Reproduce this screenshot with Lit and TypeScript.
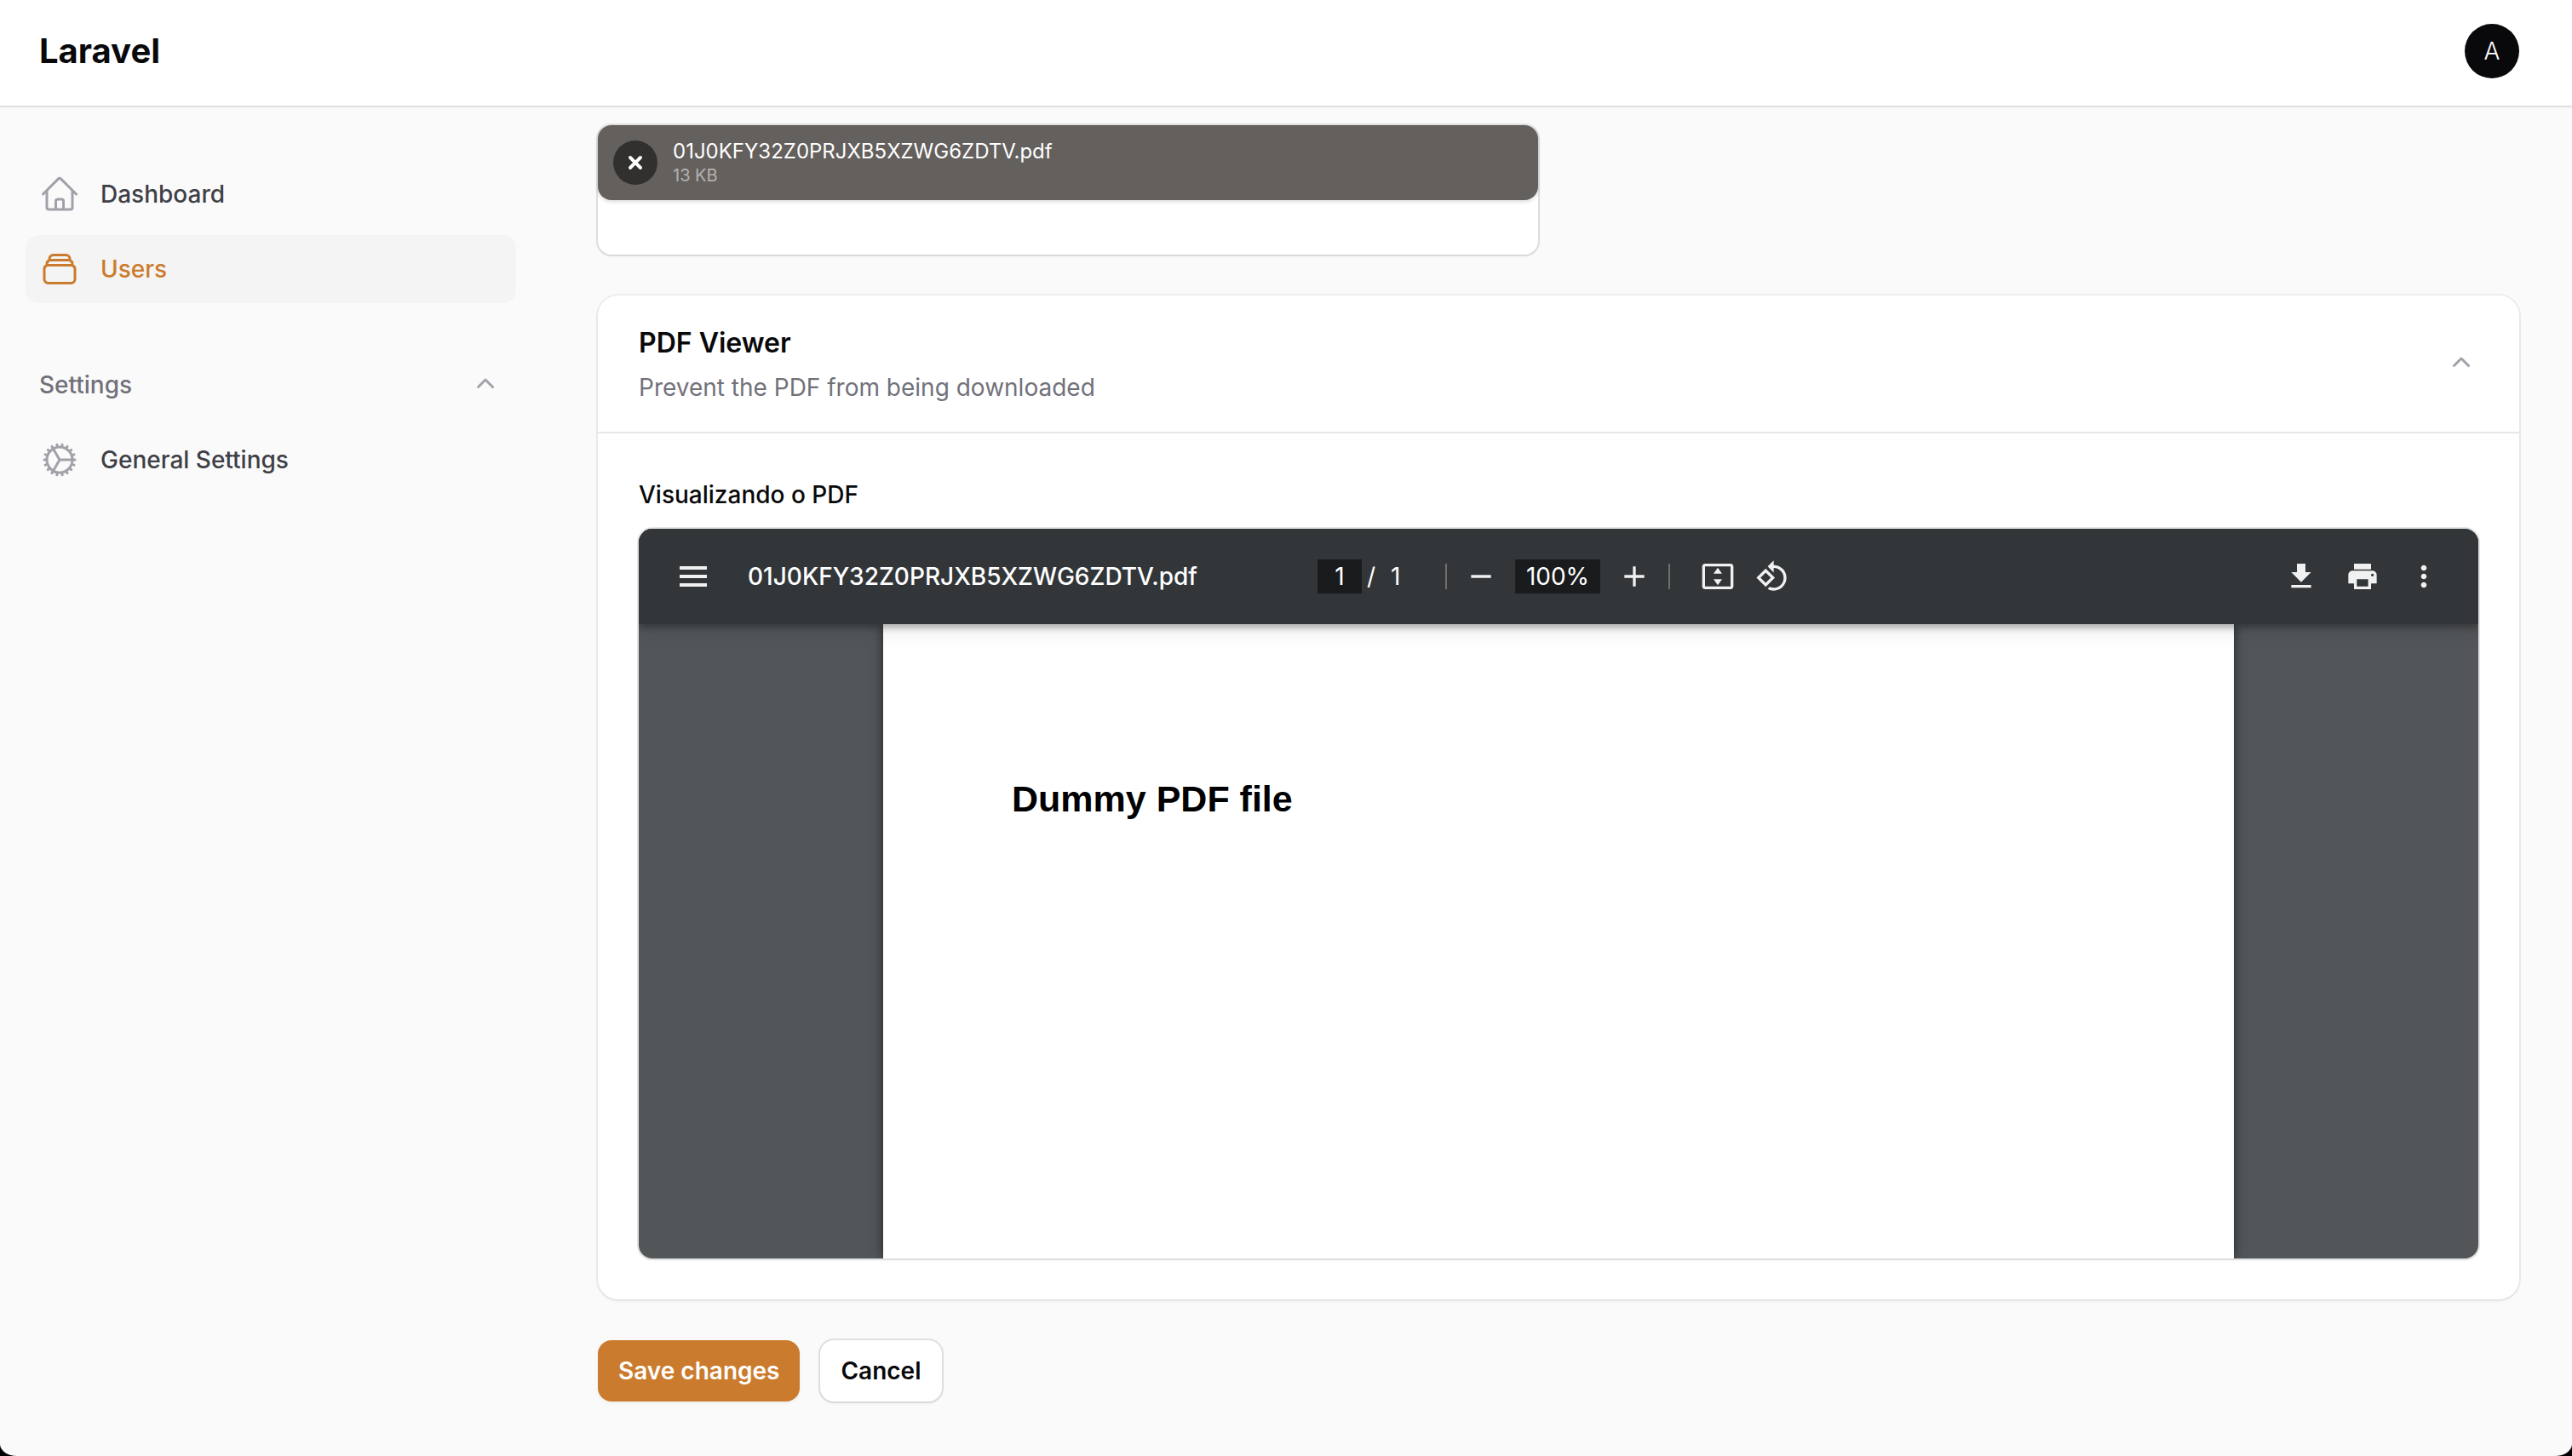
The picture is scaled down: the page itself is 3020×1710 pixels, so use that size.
import { LitElement, html, css, svg } from "lit";
import { customElement, state } from "lit/decorators.js";

const homeIcon = svg`<path d="m2.25 12 8.954-8.955c.44-.439 1.152-.439 1.591 0L21.75 12M4.5 9.75v10.125c0 .621.504 1.125 1.125 1.125H9.75v-4.875c0-.621.504-1.125 1.125-1.125h2.25c.621 0 1.125.504 1.125 1.125V21h4.125c.621 0 1.125-.504 1.125-1.125V9.75M8.25 21h8.25"/>`;
const stackIcon = svg`<path d="M6 6.878V6a2.25 2.25 0 0 1 2.25-2.25h7.5A2.25 2.25 0 0 1 18 6v.878m-12 0c.235-.083.487-.128.75-.128h10.5c.263 0 .515.045.75.128m-12 0A2.25 2.25 0 0 0 4.5 9v.878m13.5-3A2.25 2.25 0 0 1 19.5 9v.878m0 0a2.246 2.246 0 0 0-.75-.128H5.25c-.263 0-.515.045-.75.128m15 0A2.25 2.25 0 0 1 21 12v6a2.25 2.25 0 0 1-2.25 2.25H5.25A2.25 2.25 0 0 1 3 18v-6c0-.98.626-1.813 1.5-2.122"/>`;
const cogIcon = svg`<path d="M4.5 12a7.5 7.5 0 0 0 15 0m-15 0a7.5 7.5 0 1 1 15 0m-15 0H3m16.5 0H21m-1.5 0H12m-8.457 3.077 1.41-.513m14.095-5.13 1.41-.513M5.106 17.785l1.15-.964m11.49-9.642 1.149-.964M7.501 19.795l.75-1.3m7.5-12.99.75-1.3m-6.063 16.658.26-1.477m2.605-14.772.26-1.477m0 17.726-.26-1.477M10.698 4.614l-.26-1.477M16.5 19.794l-.75-1.299M7.5 4.205 12 12m6.894 5.785-1.149-.964M6.256 7.178l-1.15-.964m15.352 8.864-1.41-.513M4.954 9.435l-1.41-.514M12.002 12l-3.75 6.495"/>`;

const outline = (shape: unknown) => html`<svg class="nav-icon" viewBox="0 0 24 24" aria-hidden="true">${shape}</svg>`;
const chevron = html`<svg class="chevron" viewBox="0 0 20 20" aria-hidden="true"><path d="M9.47 6.47a.75.75 0 0 1 1.06 0l4.25 4.25a.75.75 0 1 1-1.06 1.06L10 8.06l-3.72 3.72a.75.75 0 0 1-1.06-1.06l4.25-4.25Z"/></svg>`;
const toolIcon = (d: string) => html`<svg class="tool-icon" viewBox="0 0 24 24" aria-hidden="true"><path d=${d}/></svg>`;

const MINUS = "M5 11h14v2H5z";
const PLUS = "M19 13h-6v6h-2v-6H5v-2h6V5h2v6h6z";
const FIT = "M21 3H3c-1.1 0-2 .9-2 2v14c0 1.1.9 2 2 2h18c1.1 0 2-.9 2-2V5c0-1.1-.9-2-2-2zm0 16H3V5h18v14zM12 5.8l3 4.2H9zM9 14h6l-3 4.2z";
const ROTATE = "M7.34 6.41.86 12.9l6.49 6.48 6.49-6.48-6.5-6.49zM3.69 12.9l3.66-3.66L11 12.9l-3.66 3.66-3.65-3.66zm15.67-6.26C17.61 4.88 15.3 4 13 4V.76L8.76 5 13 9.24V6c1.79 0 3.58.68 4.95 2.05 2.73 2.73 2.73 7.17 0 9.9C16.58 19.32 14.79 20 13 20c-.97 0-1.94-.21-2.84-.61l-1.49 1.49C10.02 21.62 11.51 22 13 22c2.3 0 4.61-.88 6.36-2.64 3.52-3.51 3.52-9.21 0-12.72z";
const DOWNLOAD = "M19 9h-4V3H9v6H5l7 7 7-7zM5 18v2h14v-2H5z";
const PRINT = "M19 8H5c-1.66 0-3 1.34-3 3v6h4v4h12v-4h4v-6c0-1.66-1.34-3-3-3zm-3 11H8v-5h8v5zm3-7c-.55 0-1-.45-1-1s.45-1 1-1 1 .45 1 1-.45 1-1 1zm-1-9H6v4h12V3z";
const MORE = "M12 8c1.1 0 2-.9 2-2s-.9-2-2-2-2 .9-2 2 .9 2 2 2zm0 2c-1.1 0-2 .9-2 2s.9 2 2 2 2-.9 2-2-.9-2-2-2zm0 6c-1.1 0-2 .9-2 2s.9 2 2 2 2-.9 2-2-.9-2-2-2z";

const FILE_NAME = "01J0KFY32Z0PRJXB5XZWG6ZDTV.pdf";

@customElement("pdf-viewer")
export class PdfViewer extends LitElement {
  static styles = css`
    :host {
      display: block;
      overflow: hidden;
      border-radius: 16px;
      background: #525659;
      color: #fff;
      font-family: Inter, "Liberation Sans", sans-serif;
      font-size: 28px;
    }
    button {
      display: flex;
      padding: 0;
      border: 0;
      background: none;
      color: #f1f1f1;
    }
    .toolbar {
      position: relative;
      z-index: 1;
      display: grid;
      grid-template-columns: 1fr auto 1fr;
      align-items: center;
      height: 112px;
      padding: 0 44px;
      background: #323639;
      box-shadow: 0 4px 8px rgba(0, 0, 0, 0.3), 0 8px 24px rgba(0, 0, 0, 0.08);
    }
    .start {
      display: flex;
      align-items: center;
      gap: 44px;
    }
    .name {
      font-weight: 500;
    }
    .center {
      display: flex;
      align-items: center;
    }
    .end {
      display: flex;
      justify-content: flex-end;
      gap: 32px;
    }
    .tool-icon {
      display: block;
      width: 40px;
      height: 40px;
      fill: currentColor;
    }
    .field {
      box-sizing: border-box;
      height: 40px;
      padding: 0;
      border: 0;
      background: #191b1c;
      color: #fff;
      font: inherit;
      text-align: center;
    }
    .page-field {
      width: 52px;
    }
    .zoom-field {
      width: 100px;
    }
    .count {
      display: flex;
      gap: 18px;
      padding-left: 6px;
      width: 92px;
    }
    .rule {
      width: 2px;
      height: 30px;
      background: #706f70;
    }
    .zoom {
      display: flex;
      align-items: center;
      gap: 20px;
      padding: 0 20px;
    }
    .fit {
      display: flex;
      gap: 24px;
      padding: 0 12px 0 36px;
    }
    .stage {
      display: flex;
      justify-content: center;
      min-height: 745px;
    }
    .sheet {
      box-sizing: border-box;
      width: 1586px;
      padding: 177px 151px;
      background: #fff;
      box-shadow: 0 0 12px rgba(0, 0, 0, 0.6);
    }
    .heading {
      margin: 0;
      color: #000;
      font: bold 43px/56px "Liberation Sans", Arial, sans-serif;
    }
  `;

  render() {
    return html`
      <div class="toolbar">
        <div class="start">
          <button aria-label="Menu">
            <svg class="tool-icon" viewBox="0 0 20 20" aria-hidden="true"><path d="M2 4h16v2H2zM2 9h16v2H2zM2 14h16v2H2z"/></svg>
          </button>
          <span class="name">${FILE_NAME}</span>
        </div>
        <div class="center">
          <input class="field page-field" aria-label="Page" value="1" />
          <div class="count"><span>/</span><span>1</span></div>
          <span class="rule"></span>
          <div class="zoom">
            <button aria-label="Zoom out">${toolIcon(MINUS)}</button>
            <input class="field zoom-field" aria-label="Zoom" value="100%" />
            <button aria-label="Zoom in">${toolIcon(PLUS)}</button>
          </div>
          <span class="rule"></span>
          <div class="fit">
            <button aria-label="Fit to page">${toolIcon(FIT)}</button>
            <button aria-label="Rotate">${toolIcon(ROTATE)}</button>
          </div>
        </div>
        <div class="end">
          <button aria-label="Download">${toolIcon(DOWNLOAD)}</button>
          <button aria-label="Print">${toolIcon(PRINT)}</button>
          <button aria-label="More">${toolIcon(MORE)}</button>
        </div>
      </div>
      <div class="stage">
        <article class="sheet"><h1 class="heading">Dummy PDF file</h1></article>
      </div>
    `;
  }
}

@customElement("app-root")
export class AppRoot extends LitElement {
  @state() private viewerOpen = true;
  @state() private settingsOpen = true;

  static styles = css`
    :host {
      display: block;
      background: #000;
      color: #09090b;
      font-family: Inter, "Liberation Sans", sans-serif;
      font-size: 28px;
      line-height: 40px;
    }
    .window {
      display: flex;
      flex-direction: column;
      min-height: 100vh;
      overflow: hidden;
      border-radius: 0 0 20px 20px / 0 0 14px 14px;
      background: #fafafa;
    }
    button {
      font: inherit;
    }
    .topbar {
      position: relative;
      display: flex;
      align-items: center;
      justify-content: space-between;
      padding: 28px 62px 32px 46px;
      background: #fff;
      box-shadow: 0 0 0 2px rgba(9, 9, 11, 0.08), 0 2px 4px rgba(0, 0, 0, 0.05);
    }
    .brand {
      color: inherit;
      font-size: 40px;
      font-weight: 700;
      text-decoration: none;
    }
    .avatar {
      width: 64px;
      height: 64px;
      padding: 0;
      border: 0;
      border-radius: 50%;
      background: #09090b;
      color: #fff;
      font-weight: 300;
    }
    .body {
      display: grid;
      grid-template-columns: 638px minmax(0, 1fr);
    }
    .sidebar {
      display: flex;
      flex-direction: column;
      gap: 56px;
      padding: 64px 32px 64px 30px;
    }
    .group {
      display: flex;
      flex-direction: column;
      gap: 8px;
    }
    .item {
      display: flex;
      align-items: center;
      gap: 24px;
      padding: 16px;
      border-radius: 16px;
      color: #3f3f46;
      font-weight: 500;
      text-decoration: none;
    }
    .current {
      background: #f4f4f4;
      color: #cb7b2d;
    }
    .nav-icon {
      width: 48px;
      height: 48px;
      fill: none;
      stroke: #a1a1aa;
      stroke-width: 1.5;
      stroke-linecap: round;
      stroke-linejoin: round;
    }
    .current .nav-icon {
      stroke: #cb7b2d;
    }
    .group-toggle {
      display: flex;
      align-items: center;
      justify-content: space-between;
      padding: 16px;
      border: 0;
      background: none;
      color: #71717a;
      font-weight: 500;
      line-height: 48px;
    }
    .chevron {
      display: block;
      width: 40px;
      height: 40px;
      fill: #a1a1aa;
    }
    .main {
      display: flex;
      flex-direction: column;
      gap: 48px;
      padding: 23px 62px 64px 64px;
    }
    .fields {
      display: grid;
      grid-template-columns: 1fr 1fr;
      gap: 48px;
    }
    .upload {
      padding-bottom: 64px;
      border-radius: 16px;
      background: #fff;
      box-shadow: 0 0 0 2px rgba(9, 9, 11, 0.1), 0 2px 4px rgba(0, 0, 0, 0.05);
    }
    .file {
      display: flex;
      align-items: center;
      gap: 18px;
      padding: 17px 18px;
      border-radius: 16px;
      background: #64605d;
      box-shadow: 0 2px 4px rgba(0, 0, 0, 0.15);
      color: #fff;
    }
    .file-info {
      display: flex;
      flex-direction: column;
      gap: 2px;
    }
    .remove {
      width: 52px;
      height: 52px;
      padding: 0;
      border: 0;
      border-radius: 50%;
      background: #32302e;
    }
    .remove-icon {
      display: block;
      width: 52px;
      height: 52px;
      fill: #fff;
    }
    .file-name {
      font-size: 24px;
      line-height: 28px;
    }
    .file-size {
      font-size: 20px;
      line-height: 24px;
      opacity: 0.5;
    }
    .card {
      border-radius: 24px;
      background: #fff;
      box-shadow: 0 0 0 2px rgba(9, 9, 11, 0.05), 0 2px 4px rgba(0, 0, 0, 0.05);
    }
    .card-head {
      display: flex;
      align-items: center;
      justify-content: space-between;
      padding: 32px 48px;
    }
    .titles {
      display: flex;
      flex-direction: column;
      gap: 8px;
    }
    .title {
      margin: 0;
      font-size: 32px;
      font-weight: 600;
      line-height: 48px;
    }
    .text {
      margin: 0;
      color: #71717a;
    }
    .collapse {
      padding: 0;
      border: 0;
      background: none;
    }
    .card-body {
      display: flex;
      flex-direction: column;
      gap: 16px;
      padding: 48px;
      border-top: 2px solid #e5e7eb;
    }
    .label {
      font-weight: 500;
      line-height: 48px;
    }
    .viewer {
      box-shadow: 0 0 0 2px rgba(9, 9, 11, 0.1), 0 2px 4px rgba(0, 0, 0, 0.05);
    }
    .actions {
      display: flex;
      gap: 24px;
    }
    .action {
      padding: 16px 24px;
      border: 0;
      border-radius: 16px;
      font-weight: 600;
    }
    .primary {
      background: #cb7b2d;
      color: #fff;
      box-shadow: 0 2px 4px rgba(0, 0, 0, 0.05);
    }
    .secondary {
      background: #fff;
      color: #09090b;
      box-shadow: 0 0 0 2px rgba(9, 9, 11, 0.1), 0 2px 4px rgba(0, 0, 0, 0.05);
    }
  `;

  render() {
    return html`
      <div class="window">
        <header class="topbar">
          <a class="brand" href="#">Laravel</a>
          <button class="avatar" aria-label="User menu">A</button>
        </header>
        <div class="body">
          <nav class="sidebar">
            <div class="group">
              <a class="item" href="#dashboard">${outline(homeIcon)}Dashboard</a>
              <a class="item current" href="#users" aria-current="page">${outline(stackIcon)}Users</a>
            </div>
            <div class="group">
              <button class="group-toggle" @click=${() => (this.settingsOpen = !this.settingsOpen)}>Settings${chevron}</button>
              ${this.settingsOpen
                ? html`<a class="item" href="#settings">${outline(cogIcon)}General Settings</a>`
                : null}
            </div>
          </nav>
          <main class="main">
            <div class="fields">
              <div class="upload">
                <div class="file">
                  <button class="remove" aria-label="Remove">
                    <svg class="remove-icon" viewBox="0 0 26 26" aria-hidden="true"><path d="M11.586 13l-2.293 2.293a1 1 0 0 0 1.414 1.414L13 14.414l2.293 2.293a1 1 0 0 0 1.414-1.414L14.414 13l2.293-2.293a1 1 0 0 0-1.414-1.414L13 11.586l-2.293-2.293a1 1 0 0 0-1.414 1.414L11.586 13z"/></svg>
                  </button>
                  <div class="file-info">
                    <div class="file-name">${FILE_NAME}</div>
                    <div class="file-size">13 KB</div>
                  </div>
                </div>
              </div>
            </div>
            <section class="card">
              <div class="card-head">
                <div class="titles">
                  <h2 class="title">PDF Viewer</h2>
                  <p class="text">Prevent the PDF from being downloaded</p>
                </div>
                <button class="collapse" aria-label="Collapse" @click=${() => (this.viewerOpen = !this.viewerOpen)}>${chevron}</button>
              </div>
              ${this.viewerOpen
                ? html`<div class="card-body">
                    <div class="label">Visualizando o PDF</div>
                    <pdf-viewer class="viewer"></pdf-viewer>
                  </div>`
                : null}
            </section>
            <div class="actions">
              <button class="action primary">Save changes</button>
              <button class="action secondary">Cancel</button>
            </div>
          </main>
        </div>
      </div>
    `;
  }
}
